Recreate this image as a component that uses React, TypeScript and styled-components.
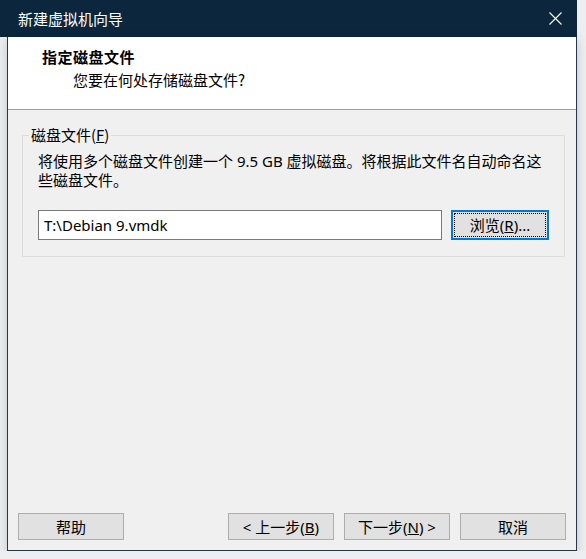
import styled, { createGlobalStyle } from 'styled-components';

const GlobalStyle = createGlobalStyle`
  html, body {
    margin: 0;
    padding: 0;
    background: #eceef0;
  }
  body {
    font-family: "Segoe UI", "Noto Sans", "Noto Sans CJK SC", sans-serif;
    font-size: 15px;
    color: #000;
  }
`;

const Shell = styled.div`
  width: 577px;
  display: flex;
  flex-direction: column;
`;

const TitleBar = styled.div`
  height: 37px;
  background: #0b263d;
  color: #fff;
  display: flex;
  align-items: center;
  justify-content: space-between;
  padding: 0 15px 0 18px;
  box-sizing: border-box;
  font-size: 15px;
`;

const TitleText = styled.span`
  font-family: "Noto Sans CJK SC", sans-serif;
  line-height: 20px;
`;

const Frame = styled.div`
  margin-left: 7px;
  width: 570px;
  height: 514px;
  box-sizing: border-box;
  border: 1px solid #26384a;
  border-top: none;
  background: #f0f0f0;
  display: flex;
  flex-direction: column;
  box-shadow: 0 3px 10px rgba(0, 0, 0, 0.18);
`;

const Header = styled.div`
  height: 73px;
  box-sizing: border-box;
  background: #fff;
  border-bottom: 1px solid #a0a0a0;
  padding: 9px 0 0 34px;
`;

const HeaderTitle = styled.div`
  font-family: "Noto Sans CJK SC", sans-serif;
  font-weight: bold;
  font-size: 15px;
  line-height: 22px;
  letter-spacing: 0.5px;
`;

const HeaderSub = styled.div`
  font-family: "Segoe UI", "Noto Sans CJK SC", sans-serif;
  font-size: 15px;
  line-height: 22px;
  margin: 1px 0 0 31px;
`;

const Content = styled.div`
  flex: 1;
  display: flex;
  flex-direction: column;
  padding: 16px 12px 0 14px;
`;

const Group = styled.fieldset`
  margin: 0;
  height: 131px;
  box-sizing: border-box;
  border: 1px solid #dcdcdc;
  padding: 8px 15px 0 15px;
`;

const Legend = styled.legend`
  margin-left: -9px;
  padding: 0 2px;
  font-family: "Noto Sans CJK SC", sans-serif;
  line-height: 18px;
`;

const Desc = styled.p`
  margin: 0;
  font-family: "Noto Sans", "Noto Sans CJK SC", sans-serif;
  line-height: 19px;
  white-space: nowrap;
`;

const PathRow = styled.div`
  display: flex;
  gap: 9px;
  margin-top: 20px;
`;

const PathInput = styled.input`
  width: 404px;
  height: 30px;
  box-sizing: border-box;
  border: 1px solid #7a7a7a;
  background: #fff;
  padding: 0 5px;
  font-family: "Noto Sans", sans-serif;
  font-size: 15px;
  color: #000;
  outline: none;
`;

const Button = styled.button<{ $focused?: boolean }>`
  width: 106px;
  height: 27px;
  box-sizing: border-box;
  background: #e1e1e1;
  border: ${({ $focused }) => ($focused ? '2px solid #0078d7' : '1px solid #adadad')};
  outline: ${({ $focused }) => ($focused ? '1px dotted #000' : 'none')};
  outline-offset: -4px;
  padding: 0;
  font-family: "Noto Sans", "Noto Sans CJK SC", sans-serif;
  font-size: 15px;
  color: #000;
  line-height: 18px;
`;

const BrowseButton = styled(Button)`
  width: 98px;
  height: 30px;
`;

const Footer = styled.div`
  margin-top: auto;
  display: flex;
  justify-content: space-between;
  padding: 0 10px 10px 10px;
`;

const ButtonGroup = styled.div`
  display: flex;
  gap: 10px;
`;

const CloseIcon = () => (
  <svg width="13" height="13" viewBox="0 0 13 13">
    <path d="M0.5 0.5 L12.5 12.5 M12.5 0.5 L0.5 12.5" stroke="#fff" strokeWidth="1.1" fill="none" />
  </svg>
);

export default function App() {
  return (
    <>
      <GlobalStyle />
      <Shell>
        <TitleBar>
          <TitleText>新建虚拟机向导</TitleText>
          <CloseIcon />
        </TitleBar>
        <Frame>
          <Header>
            <HeaderTitle>指定磁盘文件</HeaderTitle>
            <HeaderSub>您要在何处存储磁盘文件?</HeaderSub>
          </Header>
          <Content>
            <Group>
              <Legend>
                磁盘文件(<u>F</u>)
              </Legend>
              <Desc>
                将使用多个磁盘文件创建一个 9.5 GB 虚拟磁盘。将根据此文件名自动命名这
                <br />
                些磁盘文件。
              </Desc>
              <PathRow>
                <PathInput defaultValue="T:\Debian 9.vmdk" />
                <BrowseButton $focused>
                  浏览(<u>R</u>)...
                </BrowseButton>
              </PathRow>
            </Group>
          </Content>
          <Footer>
            <Button>帮助</Button>
            <ButtonGroup>
              <Button>
                &lt; 上一步(<u>B</u>)
              </Button>
              <Button>
                下一步(<u>N</u>) &gt;
              </Button>
              <Button>取消</Button>
            </ButtonGroup>
          </Footer>
        </Frame>
      </Shell>
    </>
  );
}
